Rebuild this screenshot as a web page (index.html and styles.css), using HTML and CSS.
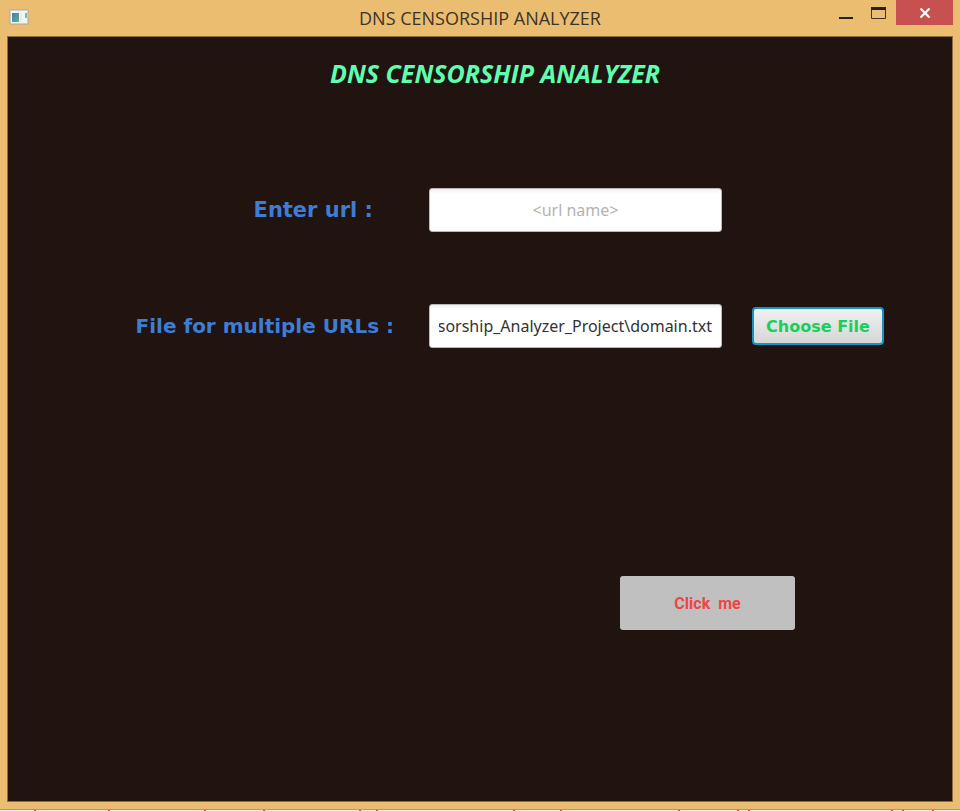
FILE: index.html
```html
<!DOCTYPE html>
<html lang="en">
<head>
<meta charset="utf-8">
<title>DNS CENSORSHIP ANALYZER</title>
<link rel="stylesheet" href="styles.css">
</head>
<body>
<div class="window">
  <header class="titlebar">
    <svg class="app-icon" width="20" height="16" viewBox="0 0 20 16" aria-hidden="true">
      <defs><linearGradient id="pane" x1="0" y1="0" x2="1" y2="1"><stop offset="0" stop-color="#3f7fae"/><stop offset="1" stop-color="#62b184"/></linearGradient></defs>
      <rect x="1" y="1" width="18" height="14" fill="#f4f4f6" stroke="#a9a79f"/>
      <path d="M1 1.500h18" stroke="#c3d3e2"/>
      <rect x="3" y="4" width="7" height="9" fill="url(#pane)"/>
      <path d="M12 4v9" stroke="#e3e3e8"/>
      <rect x="16" y="4" width="2" height="5" fill="#79bda6"/>
    </svg>
    <span class="window-title">DNS CENSORSHIP ANALYZER</span>
    <div class="controls">
      <button class="control" type="button" aria-label="Minimize"><svg width="14" height="12" viewBox="0 0 14 12"><path d="M0 10h14v2H0z" fill="#222"/></svg></button>
      <button class="control" type="button" aria-label="Maximize"><svg width="15" height="12" viewBox="0 0 15 12"><path d="M.5 .5h14v11H.5z" fill="none" stroke="#3d3627"/><path d="M0 0h15v3H0z" fill="#222"/></svg></button>
      <button class="control close" type="button" aria-label="Close"><svg width="12" height="10" viewBox="0 0 12 10"><path d="M1.500 .5l9 9M10.500 .5l-9 9" stroke="#fff" stroke-width="2.200"/></svg></button>
    </div>
  </header>
  <main class="content">
    <h1 class="heading">DNS CENSORSHIP ANALYZER</h1>
    <form class="form">
      <label class="label label-url" for="url">Enter url :</label>
      <input class="field field-url" id="url" type="text" placeholder="&lt;url name&gt;">
      <label class="label label-file" for="file">File for multiple URLs :</label>
      <input class="field" id="file" type="text" value="DNS_Censorship_Analyzer_Project\domain.txt">
      <button class="choose" type="button">Choose File</button>
      <button class="submit" type="button">Click&nbsp; me</button>
    </form>
  </main>
</div>
<svg class="behind" viewBox="0 0 960 1" preserveAspectRatio="none" aria-hidden="true"><path d="M34 0h2v1h-2zM108 0h2v1h-2zM204 0h2v1h-2zM263 0h2v1h-2zM359 0h2v1h-2zM376 0h2v1h-2zM513 0h2v1h-2zM560 0h2v1h-2zM678 0h2v1h-2zM737 0h2v1h-2zM748 0h2v1h-2zM891 0h2v1h-2zM902 0h2v1h-2zM932 0h2v1h-2z" fill="#d84660"/></svg>
<script src="script.js"></script>
</body>
</html>
```
FILE: styles.css
```css
* { box-sizing: border-box; }
body {
  margin: 0;
  height: 100vh;
  display: flex;
  flex-direction: column;
  background: #f3eff0;
  font-family: "Noto Sans", "Open Sans", sans-serif;
}
.window {
  flex: 1;
  display: flex;
  flex-direction: column;
  padding: 0 7px 7px;
  background: #ebbd70;
  border-bottom: 1px solid #b99554;
}
.titlebar {
  display: grid;
  grid-template-columns: 124px 1fr 124px;
  height: 36px;
  align-items: start;
}
.app-icon { margin: 9px 0 0 2px; }
.window-title {
  text-align: center;
  font-family: "Open Sans", sans-serif;
  font-size: 18px;
  line-height: 36px;
  color: #3b3428;
}
.controls { display: flex; justify-content: flex-end; }
.control {
  width: 33px;
  height: 25px;
  padding: 0;
  border: 0;
  background: none;
  display: flex;
  align-items: center;
  justify-content: center;
}
.close { width: 57px; margin-left: 1px; background: #c75050; }
.content {
  flex: 1;
  border: 1px solid #8c6d3e;
  background: #211310;
}
.heading {
  margin: 19px 0 0;
  padding-left: 30px;
  text-align: center;
  font-family: "Open Sans", sans-serif;
  font-size: 25px;
  line-height: 34px;
  font-style: italic;
  font-weight: 700;
  color: #5fffb0;
}
.form {
  display: grid;
  grid-template-columns: 1fr 293px 132px;
  column-gap: 30px;
  row-gap: 72px;
  align-items: center;
  margin-top: 98px;
  padding-right: 68px;
}
.label {
  justify-self: end;
  font-family: "DejaVu Sans", sans-serif;
  font-weight: 700;
  line-height: 30px;
  color: #3e7dd4;
  white-space: nowrap;
}
.label-url { padding-right: 26px; font-size: 21px; }
.label-file { grid-column: 1; padding-right: 5px; font-size: 20px; }
.field {
  width: 100%;
  height: 44px;
  padding: 0 9px;
  border: 1px solid #bcb8b7;
  border-radius: 3px;
  background: linear-gradient(#f1f1f1, #fff 5px);
  font-family: "Noto Sans", sans-serif;
  font-size: 16px;
  color: #333;
}
.field-url { text-align: center; }
.field::placeholder { color: #b3b3b3; opacity: 1; }
.choose {
  height: 38px;
  padding: 0;
  border: 2px solid #1593c4;
  border-radius: 4px;
  background: linear-gradient(#f0f0f0, #d6d6d6);
  font-family: "DejaVu Sans", sans-serif;
  font-size: 16px;
  font-weight: 700;
  color: #16d05c;
  white-space: nowrap;
}
.submit {
  grid-column: 2 / 4;
  justify-self: end;
  width: 175px;
  height: 54px;
  margin: 156px 89px 0 0;
  border: 0;
  border-radius: 3px;
  background: #c0c0c0;
  font-family: Roboto, sans-serif;
  font-size: 16px;
  font-weight: 700;
  color: #f04444;
}
.behind { display: block; width: 100%; height: 1px; }
```
FILE: script.js
```js
const file = document.getElementById("file");
file.scrollLeft = file.scrollWidth;
```
